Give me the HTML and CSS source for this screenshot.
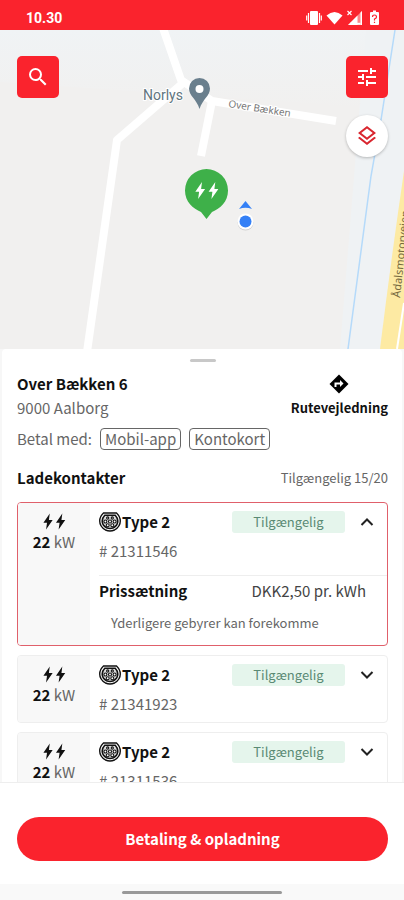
FILE: index.html
```html
<!DOCTYPE html>
<html lang="da">
<head>
    <meta charset="UTF-8">
    <meta name="viewport" content="width=device-width, initial-scale=1.0">
    <title>Over Bækken 6</title>
    <link rel="stylesheet" href="styles.css">
</head>
<body>
    <!-- Shared icons -->
    <svg class="sprite" aria-hidden="true">
        <symbol id="bolts" viewBox="0 0 24 18">
            <path d="M7.5 0.5 0.8 10.2H4.6L3.6 17.5 10.6 7.4H6.6Z"/>
            <path d="M20.8 0.5 14.1 10.2H17.9L16.9 17.5 23.9 7.4H19.9Z"/>
        </symbol>
        <symbol id="type2" viewBox="0 0 22 20">
            <path d="M4.500 1H17.500Q21.300 4.500 21.300 9 21.300 14.500 15.500 18 11 20 6.500 18 0.700 14.500 0.700 9 0.700 4.500 4.500 1Z" fill="#fff" stroke="#111" stroke-width="1.400"/>
            <path d="M5.800 3.300H16.200Q18.800 6 18.800 9 18.800 13.300 14.500 15.800 11 17.300 7.500 15.800 3.200 13.300 3.200 9 3.200 6 5.800 3.300Z" fill="#ddd" stroke="#111" stroke-width="1.600"/>
            <g fill="#fff" stroke="#111" stroke-width="1.100">
                <circle cx="8.700" cy="6" r="1.100"/>
                <circle cx="13.300" cy="6" r="1.100"/>
                <circle cx="6.400" cy="9.500" r="1.500"/>
                <circle cx="11" cy="9.500" r="1.500"/>
                <circle cx="15.600" cy="9.500" r="1.500"/>
                <circle cx="8.700" cy="13.200" r="1.500"/>
                <circle cx="13.300" cy="13.200" r="1.500"/>
            </g>
        </symbol>
        <symbol id="chevron" viewBox="0 0 14 10">
            <path d="M1.500 2 7 7.500 12.500 2" fill="none" stroke="#222" stroke-width="2"/>
        </symbol>
    </svg>

    <header class="status-bar">
        <span class="clock">10.30</span>
        <svg class="status-icons" viewBox="0 0 74 16" aria-hidden="true">
            <rect x="4" y="1" width="8" height="14" rx="1"/>
            <path d="M2.500 3V13M13.500 3V13M0.700 5.500V10.500M15.300 5.500V10.500" stroke="#fff" stroke-width="1.200"/>
            <path d="M20.500 5.500Q28.500-1.500 36.500 5.500L28.500 14.500Z"/>
            <path d="M56 1V15H42Z" fill="#fff" fill-opacity="0.450"/>
            <path d="M51.500 5.500V15H42ZM54.500 2.500 56 1V15H54.500Z"/>
            <path d="M54.500 13.800H44" stroke="#fff" stroke-width="2"/>
            <path d="M41.500 1 45.500 5M45.500 1 41.500 5" stroke="#fff" stroke-width="1.200"/>
            <path d="M65 2H67V0.500H70V2H72Q73 2 73 3V14Q73 15 72 15H65Q64 15 64 14V3Q64 2 65 2Z"/>
            <path d="M66.500 7Q66.500 5 68.500 5T70.500 7Q70.500 8.200 68.500 9V10.500M68.500 11.800V13" fill="none" stroke="#fa232d" stroke-width="1.200"/>
        </svg>
    </header>

    <section class="map">
        <svg class="map-canvas" viewBox="0 30 404 319" preserveAspectRatio="xMidYMid slice">
            <defs>
                <linearGradient id="haze" x1="0" y1="0" x2="0" y2="1">
                    <stop offset="0" stop-color="#f0f3f5"/>
                    <stop offset="1" stop-color="#f1f0ef"/>
                </linearGradient>
            </defs>
            <rect x="0" y="30" width="404" height="319" fill="#f1f0ef"/>
            <path d="M0 30H404V110L0 82Z" fill="url(#haze)"/>
            <path d="M366 30H404V349H340Z" fill="#eff2f4"/>
            <g fill="none" stroke="#fff" stroke-width="8" stroke-linejoin="round">
                <path d="M163 28 181 80 212 101 336 121"/>
                <path d="M183 83 117 140Q107 210 87 352"/>
                <path d="M212 101 201 156"/>
            </g>
            <path d="M395 30 381 120 371 176 348 349" fill="none" stroke="#b5dafa" stroke-width="1.500"/>
            <path d="M404 171V349H380Q391 260 404 171Z" fill="#fdeaa3"/>
            <path d="M397 349 404 303" fill="none" stroke="#fff" stroke-width="2"/>
            <text class="road-label" transform="translate(228 107) rotate(9)">Over Bækken</text>
            <text class="road-label motorway" transform="translate(400 298) rotate(-84)">Ådalsmotorvejen</text>
            <text class="place-label" x="143" y="100">Norlys</text>
            <path d="M199.500 78A10.500 10.500 0 0 1 210 88.500C210 96 202.500 99 199.500 109 196.500 99 189 96 189 88.500A10.500 10.500 0 0 1 199.500 78Z" fill="#6a7f8d"/>
            <circle cx="199.500" cy="89" r="4" fill="#fff"/>
            <path d="M206.500 169A21.500 21.500 0 0 1 228 190.500C228 202 220 208.500 212 212L206.500 219 201 212C193 208.500 185 202 185 190.500A21.500 21.500 0 0 1 206.500 169Z" fill="#3eb049"/>
            <use href="#bolts" x="194.500" y="181" width="24" height="19" fill="#fff"/>
            <circle cx="245.500" cy="222.500" r="8" fill="#d0d0d0"/>
            <circle cx="245.500" cy="221.500" r="8" fill="#fff"/>
            <circle cx="245.500" cy="221.500" r="6" fill="#3480f6"/>
            <path d="M245.500 201 252 209Q245.500 206.500 239 209Z" fill="#3480f6"/>
        </svg>
        <div class="map-controls">
            <button class="map-btn" aria-label="Søg">
                <svg viewBox="0 0 24 24" width="24" height="24">
                    <path d="M15.500 14h-.79l-.28-.27A6.470 6.470 0 0 0 16 9.500 6.500 6.500 0 1 0 9.500 16c1.610 0 3.090-.59 4.230-1.570l.27.28v.79l5 4.990L20.490 19l-4.990-5zm-6 0C7.010 14 5 11.990 5 9.500S7.010 5 9.500 5 14 7.010 14 9.500 11.990 14 9.500 14z"/>
                </svg>
            </button>
            <div class="map-tools">
                <button class="map-btn" aria-label="Filtre">
                    <svg viewBox="0 0 24 24" width="24" height="24">
                        <path d="M3 17v2h6v-2H3zM3 5v2h10V5H3zm10 16v-2h8v-2h-8v-2h-2v6h2zM7 9v2H3v2h4v2h2V9H7zm14 4v-2H11v2h10zm-6-4h2V7h4V5h-4V3h-2v6z"/>
                    </svg>
                </button>
                <button class="map-btn layers" aria-label="Kortlag">
                    <svg viewBox="0 0 24 24" width="24" height="24">
                        <path d="M11.990 18.540l-7.370-5.730L3 14.070l9 7 9-7-1.630-1.270-7.380 5.740zM12 16l7.360-5.730L21 9l-9-7-9 7 1.630 1.270L12 16zm0-11.470L17.740 9 12 13.470 6.260 9 12 4.530z"/>
                    </svg>
                </button>
            </div>
        </div>
    </section>

    <main class="sheet">
        <div class="handle"></div>

        <div class="station">
            <div>
                <h1>Over Bækken 6</h1>
                <p class="city">9000 Aalborg</p>
            </div>
            <a class="directions" href="#rute">
                <svg viewBox="0 0 20 20" width="20" height="20" aria-hidden="true">
                    <path d="M10 0.500 19.500 10 10 19.500 0.500 10Z"/>
                    <path d="M6.500 13V9.500H12" fill="none" stroke="#fff" stroke-width="2"/>
                    <path d="M11 6 14.500 9.500 11 13Z" fill="#fff"/>
                </svg>
                Rutevejledning
            </a>
        </div>

        <div class="payment">
            <span>Betal med:</span>
            <span class="chip">Mobil-app</span>
            <span class="chip">Kontokort</span>
        </div>

        <div class="list-head">
            <h2>Ladekontakter</h2>
            <span>Tilgængelig 15/20</span>
        </div>

        <div class="connectors">
            <article class="connector open">
                <div class="power">
                    <svg class="bolts"><use href="#bolts"/></svg>
                    <span><b>22</b> kW</span>
                </div>
                <div class="details">
                    <div class="summary">
                        <svg class="plug"><use href="#type2"/></svg>
                        <h3>Type 2</h3>
                        <span class="badge">Tilgængelig</span>
                        <button class="toggle" aria-label="Skjul detaljer" aria-expanded="true"><svg class="chevron"><use href="#chevron"/></svg></button>
                    </div>
                    <p class="number"># 21311546</p>
                    <div class="price">
                        <h3>Prissætning</h3>
                        <span>DKK2,50 pr. kWh</span>
                    </div>
                    <p class="note">Yderligere gebyrer kan forekomme</p>
                </div>
            </article>

            <article class="connector">
                <div class="power">
                    <svg class="bolts"><use href="#bolts"/></svg>
                    <span><b>22</b> kW</span>
                </div>
                <div class="details">
                    <div class="summary">
                        <svg class="plug"><use href="#type2"/></svg>
                        <h3>Type 2</h3>
                        <span class="badge">Tilgængelig</span>
                        <button class="toggle" aria-label="Vis detaljer" aria-expanded="false"><svg class="chevron"><use href="#chevron"/></svg></button>
                    </div>
                    <p class="number"># 21341923</p>
                </div>
            </article>

            <article class="connector">
                <div class="power">
                    <svg class="bolts"><use href="#bolts"/></svg>
                    <span><b>22</b> kW</span>
                </div>
                <div class="details">
                    <div class="summary">
                        <svg class="plug"><use href="#type2"/></svg>
                        <h3>Type 2</h3>
                        <span class="badge">Tilgængelig</span>
                        <button class="toggle" aria-label="Vis detaljer" aria-expanded="false"><svg class="chevron"><use href="#chevron"/></svg></button>
                    </div>
                    <p class="number"># 21311536</p>
                </div>
            </article>
        </div>
    </main>

    <footer class="footer">
        <button class="pay-btn">Betaling &amp; opladning</button>
        <div class="nav-bar"><span class="nav-pill"></span></div>
    </footer>
</body>
</html>
```

FILE: styles.css
```css
* {
    box-sizing: border-box;
}
body {
    margin: 0;
    height: 100vh;
    display: flex;
    flex-direction: column;
    overflow: hidden;
    background: #f7f7f7;
    color: #666;
    font-family: "Noto Sans CJK SC", "Noto Sans", sans-serif;
    font-size: 15px;
    line-height: 24px;
}
h1, h2, h3, p {
    margin: 0;
    font-size: 15px;
}
h1, h2, h3 {
    color: #111;
    font-weight: 700;
}
button {
    padding: 0;
    border: 0;
    font: inherit;
    cursor: pointer;
}
svg {
    display: block;
    flex: none;
}
.sprite {
    position: absolute;
    width: 0;
    height: 0;
}

/* Status bar */
.status-bar {
    flex: none;
    display: flex;
    align-items: center;
    justify-content: space-between;
    height: 30px;
    padding: 5px 24px 0 26px;
    background: #fa232d;
    color: #fff;
}
.clock {
    font-family: Roboto, sans-serif;
    font-size: 14px;
    font-weight: 700;
}
.status-icons {
    width: 74px;
    height: 16px;
    fill: #fff;
}

/* Map */
.map {
    position: relative;
    flex: none;
    height: 319px;
}
.map-canvas {
    width: 100%;
    height: 100%;
}
.road-label {
    font: 11px "Noto Sans", sans-serif;
    font-size: 10px;
    fill: #777;
    stroke: #fff;
    stroke-width: 2px;
    paint-order: stroke;
}
.road-label.motorway {
    font-size: 11px;
    fill: #75693f;
    stroke: #fdeaa3;
}
.place-label {
    font: 14px Roboto, sans-serif;
    fill: #617580;
    stroke: #fff;
    stroke-width: 2px;
    paint-order: stroke;
}
.map-controls {
    position: absolute;
    top: 26px;
    left: 17px;
    right: 16px;
    display: flex;
    justify-content: space-between;
    align-items: flex-start;
}
.map-tools {
    display: grid;
    gap: 17px;
}
.map-btn {
    display: grid;
    place-items: center;
    width: 42px;
    height: 42px;
    border-radius: 5px;
    background: #fa232d;
    fill: #fff;
}
.map-btn.layers {
    border-radius: 50%;
    background: #fff;
    fill: #d9262f;
    box-shadow: 0 1px 3px rgba(0, 0, 0, 0.25);
}

/* Bottom sheet */
.sheet {
    flex: 1;
    min-height: 0;
    overflow: hidden;
    margin: 0 2px;
    padding: 10px 14px 0 15px;
    border-radius: 4px 4px 0 0;
    background: #fff;
}
.handle {
    width: 26px;
    height: 3px;
    margin: 0 auto 10px;
    border-radius: 2px;
    background: #c8c8c8;
}
.station {
    display: flex;
    justify-content: space-between;
}
.directions {
    display: flex;
    flex-direction: column;
    align-items: center;
    gap: 2px;
    padding-top: 2px;
    color: #111;
    font-size: 13px;
    font-weight: 700;
    text-decoration: none;
}
.payment {
    display: flex;
    align-items: center;
    gap: 8px;
    margin-top: 7px;
}
.chip {
    padding: 0 4px;
    border: 1px solid #666;
    border-radius: 4px;
    line-height: 20px;
}
.list-head {
    display: flex;
    justify-content: space-between;
    align-items: center;
    margin: 15px 0 12px;
    font-size: 13px;
}

/* Connectors */
.connectors {
    display: grid;
    gap: 9px;
}
.connector {
    display: flex;
    min-height: 68px;
    border: 1px solid #eee;
    border-radius: 4px;
    overflow: hidden;
}
.connector.open {
    min-height: 144px;
    border-color: #e0606b;
}
.power {
    flex: none;
    display: flex;
    flex-direction: column;
    align-items: center;
    width: 72px;
    padding-top: 10px;
    background: #f8f8f8;
}
.power b {
    color: #111;
}
.bolts {
    width: 24px;
    height: 17px;
    fill: #111;
}
.details {
    flex: 1;
    padding-left: 9px;
}
.summary {
    display: flex;
    align-items: center;
    padding: 6px 7px 0 0;
}
.plug {
    width: 22px;
    height: 20px;
    margin-right: 1px;
}
.badge {
    width: 113px;
    margin-left: auto;
    border-radius: 3px;
    background: #e5f5ec;
    color: #5a8a74;
    font-size: 13px;
    line-height: 22px;
    text-align: center;
}
.toggle {
    display: grid;
    place-items: center;
    width: 26px;
    height: 26px;
    margin-left: 9px;
    background: none;
}
.chevron {
    width: 14px;
    height: 10px;
}
.open .chevron {
    transform: rotate(180deg);
}
.number {
    padding-top: 4px;
}
.price {
    display: flex;
    justify-content: space-between;
    margin-top: 12px;
    padding: 3px 21px 0 0;
    border-top: 1px solid #eee;
    color: #444;
}
.note {
    padding: 8px 0 0 12px;
    font-size: 13px;
}

/* Footer */
.footer {
    flex: none;
    padding-top: 34px;
    border-top: 1px solid #eee;
    background: #fff;
}
.pay-btn {
    display: block;
    width: calc(100% - 33px);
    height: 44px;
    margin: 0 16px 23px 17px;
    border-radius: 22px;
    background: #fa232d;
    color: #fff;
    font-weight: 700;
}
.nav-bar {
    display: flex;
    justify-content: center;
    padding: 7px 0 6px;
    background: #f9f9f9;
}
.nav-pill {
    width: 160px;
    height: 3px;
    border-radius: 2px;
    background: #999;
}
```
